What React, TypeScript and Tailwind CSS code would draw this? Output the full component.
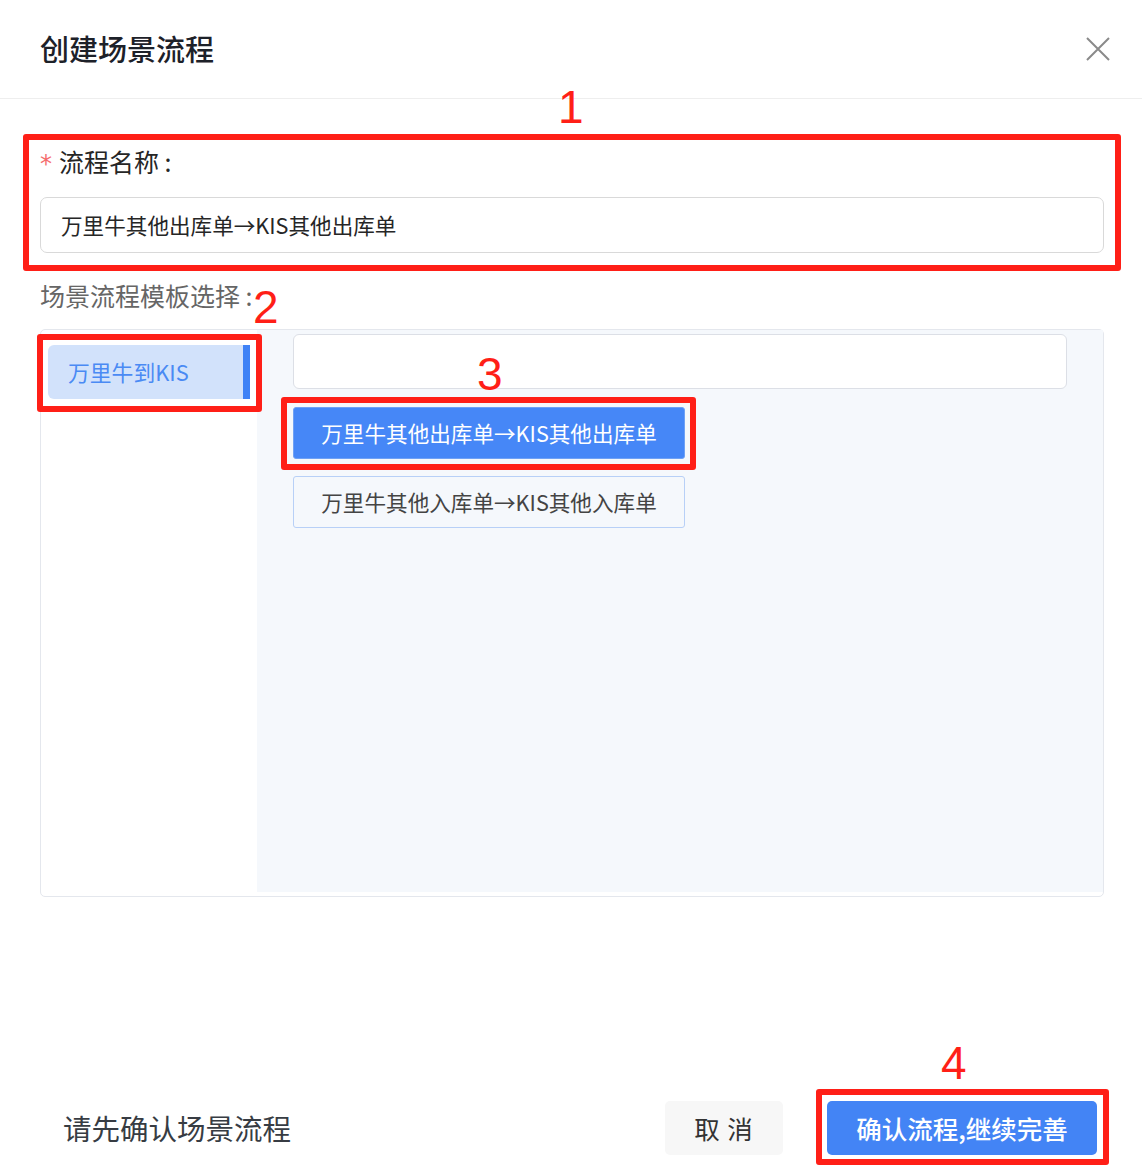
import React from "react";

const font = { fontFamily: '"Noto Sans CJK SC", "Noto Sans", sans-serif' };

const templates = [
  { name: "万里牛其他出库单→KIS其他出库单", active: true },
  { name: "万里牛其他入库单→KIS其他入库单", active: false },
];

// red marker numbers drawn over the screenshot
const Mark = ({ n, className }: { n: string; className: string }) => (
  <span
    className={`absolute text-[46px] leading-none text-[#ff1f17] font-['Liberation_Sans',sans-serif] ${className}`}
  >
    {n}
  </span>
);

const Frame = ({ className }: { className: string }) => (
  <div className={`absolute border-[6px] border-[#ff1f17] rounded-[3px] pointer-events-none ${className}`} />
);

export default function App() {
  return (
    <div
      className="relative w-[1142px] h-[1176px] bg-white flex flex-col rounded-tl-[10px] overflow-hidden"
      style={font}
    >
      {/* header */}
      <div className="h-[99px] shrink-0 border-b border-[#eeeeee] pl-[40px] pr-[31px] flex items-center justify-between">
        <h1 className="text-[29px] text-[#1d2129] font-medium">创建场景流程</h1>
        <button className="w-[26px] h-[26px] flex items-center justify-center">
          <svg width="24" height="24" viewBox="0 0 24 24" stroke="#8a8a8a" strokeWidth="2" fill="none">
            <path d="M1 1 L23 23 M23 1 L1 23" />
          </svg>
        </button>
      </div>

      {/* form */}
      <div className="pl-[40px] pr-[38px] flex flex-col">
        <div className="mt-[48px] h-[30px] flex items-center text-[25px] text-[#262626]">
          <span className="text-[#f56c6c] text-[24px] leading-none font-['DejaVu_Sans',sans-serif] mr-[7px] pt-[4px]">
            *
          </span>
          <span>流程名称 :</span>
        </div>
        <div className="mt-[20px] h-[56px] border border-[#d9d9d9] rounded-[7px] flex items-center px-[20px] text-[21.6px] text-[#262626]">
          万里牛其他出库单→KIS其他出库单
        </div>

        <div className="mt-[28px] h-[30px] flex items-center text-[25px] text-[#666666]">场景流程模板选择 :</div>

        <div className="mt-[18px] h-[568px] border border-[#e4e7ed] rounded-[5px] flex pb-[4px]">
          <div className="w-[216px] shrink-0 px-[7px] pt-[15px]">
            <div className="h-[54px] rounded-[6px] bg-[#d2e2fb] flex items-center justify-between pl-[20px]">
              <span className="text-[21.8px] text-[#4a8af4]">万里牛到KIS</span>
              <span className="w-[7px] h-full bg-[#3f82f6]" />
            </div>
          </div>
          <div className="flex-1 bg-[#f5f8fc] pl-[36px] pr-[36px] pt-[4px] flex flex-col">
            <div className="h-[55px] bg-white border border-[#dcdfe6] rounded-[6px]" />
            <div className="mt-[18px] flex flex-col gap-[17px] w-[392px]">
              {templates.map((t) => (
                <div
                  key={t.name}
                  className={`h-[52px] rounded-[3px] flex items-center justify-center text-[21.6px] ${
                    t.active
                      ? "bg-[#4687f7] text-white border border-[#6fa1f5]"
                      : "bg-[#f5f8fc] text-[#444444] border border-[#b8d0f7]"
                  }`}
                >
                  {t.name}
                </div>
              ))}
            </div>
          </div>
        </div>
      </div>

      {/* footer */}
      <div className="mt-auto mb-[21px] h-[54px] pl-[63px] pr-[45px] flex items-center justify-between">
        <span className="text-[28.5px] text-[#373c43]">请先确认场景流程</span>
        <div className="flex items-center gap-[44px]">
          <button className="w-[118px] h-[54px] rounded-[5px] bg-[#f7f7f7] text-[25.5px] tracking-[1px] text-[#333333]">
            取 消
          </button>
          <button className="w-[270px] h-[54px] rounded-[5px] bg-[#4384f5] text-[25.5px] font-medium text-white">
            确认流程,继续完善
          </button>
        </div>
      </div>

      {/* annotations */}
      <Frame className="left-[23px] top-[134px] w-[1098px] h-[137px]" />
      <Frame className="left-[37px] top-[334px] w-[225px] h-[78px]" />
      <Frame className="left-[281px] top-[397px] w-[415px] h-[73px]" />
      <Frame className="left-[816px] top-[1089px] w-[293px] h-[76px]" />
      <Mark n="1" className="left-[558px] top-[84px]" />
      <Mark n="2" className="left-[253px] top-[284px]" />
      <Mark n="3" className="left-[477px] top-[351px]" />
      <Mark n="4" className="left-[941px] top-[1040px]" />
    </div>
  );
}
